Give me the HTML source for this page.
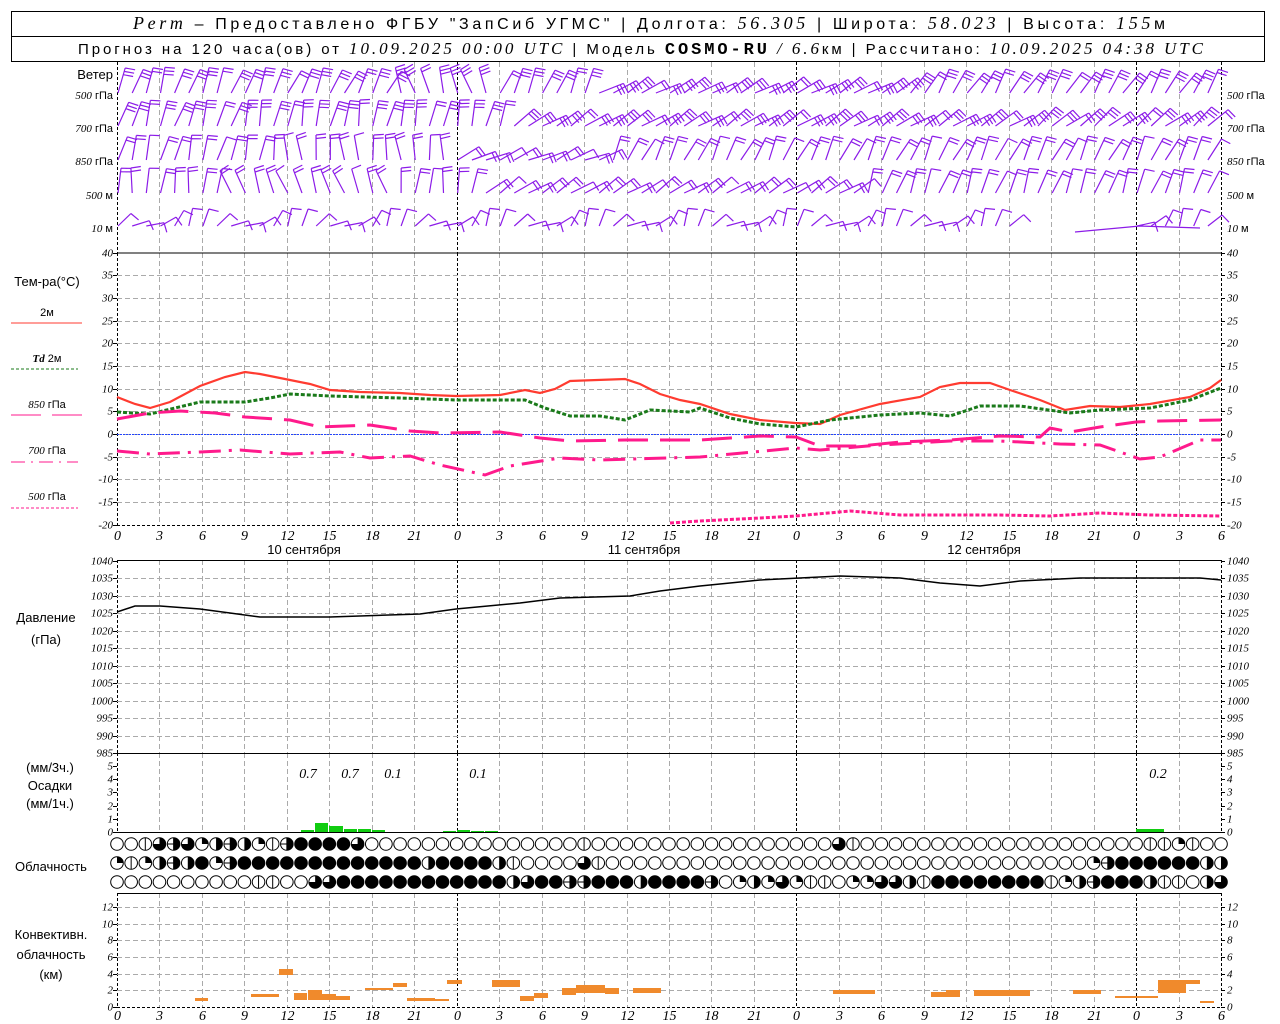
<!DOCTYPE html>
<html><head><meta charset="utf-8"><style>
html,body{margin:0;padding:0;background:#fff;width:1280px;height:1024px;overflow:hidden}
svg{display:block}
text{font-family:"Liberation Sans",sans-serif;font-size:12px;fill:#000}
.n{font-family:"Liberation Serif",serif;font-style:italic;font-size:11px}
.ax{font-family:"Liberation Serif",serif;font-style:italic;font-size:14px}
</style></head><body>
<svg id="s" width="1280" height="1024" xmlns="http://www.w3.org/2000/svg">
<rect x="11.5" y="11.5" width="1253" height="50" fill="none" stroke="#000"/>
<line x1="11" y1="36.5" x2="1265" y2="36.5" stroke="#000"/>
<text x="133" y="29" textLength="1032" lengthAdjust="spacing" style="font-size:16px"><tspan style="font-family:'Liberation Serif';font-style:italic;font-size:18px">Perm</tspan> – Предоставлено ФГБУ "ЗапСиб УГМС" | Долгота: <tspan style="font-family:'Liberation Serif';font-style:italic;font-size:18px">56.305</tspan> | Широта: <tspan style="font-family:'Liberation Serif';font-style:italic;font-size:18px">58.023</tspan> | Высота: <tspan style="font-family:'Liberation Serif';font-style:italic;font-size:18px">155</tspan>м</text>
<text x="78" y="54" textLength="1125" lengthAdjust="spacing" style="font-size:15px">Прогноз на 120 часа(ов) от <tspan style="font-family:'Liberation Serif';font-style:italic;font-size:17px">10.09.2025 00:00 UTC</tspan>  | Модель <tspan style="font-family:'Liberation Mono';font-weight:bold;font-size:17px">COSMO-RU</tspan> <tspan style="font-family:'Liberation Serif';font-style:italic;font-size:17px">/ 6.6</tspan>км | Рассчитано: <tspan style="font-family:'Liberation Serif';font-style:italic;font-size:17px">10.09.2025 04:38 UTC</tspan></text>
<g id="grid"></g>
<g id="wind" stroke="#8c1ce8" stroke-width="1.2" fill="none"></g>
<g id="data"></g>
<g id="clouds"></g>
<text x="113" y="79" text-anchor="end" style="font-size:13px">Ветер</text>
<text x="113" y="99" text-anchor="end" style="font-size:11px"><tspan class="n">500</tspan> гПа</text>
<text x="113" y="132" text-anchor="end" style="font-size:11px"><tspan class="n">700</tspan> гПа</text>
<text x="113" y="165" text-anchor="end" style="font-size:11px"><tspan class="n">850</tspan> гПа</text>
<text x="113" y="199" text-anchor="end" style="font-size:11px"><tspan class="n">500</tspan> м</text>
<text x="113" y="232" text-anchor="end" style="font-size:11px"><tspan class="n">10</tspan>   м</text>
<text x="1227" y="99" style="font-size:11px"><tspan class="n">500</tspan> гПа</text>
<text x="1227" y="132" style="font-size:11px"><tspan class="n">700</tspan> гПа</text>
<text x="1227" y="165" style="font-size:11px"><tspan class="n">850</tspan> гПа</text>
<text x="1227" y="199" style="font-size:11px"><tspan class="n">500</tspan> м</text>
<text x="1227" y="232" style="font-size:11px"><tspan class="n">10</tspan>   м</text>
<text x="47" y="286" text-anchor="middle" style="font-size:13px">Тем-ра(°C)</text>
<text x="47" y="316" text-anchor="middle" style="font-size:11px">2м</text>
<line x1="11" y1="323" x2="82" y2="323" stroke="#ff3b30"/>
<text x="47" y="362" text-anchor="middle" style="font-size:11px"><tspan class="n" style="font-weight:bold">Td</tspan>  2м</text>
<line x1="11" y1="369" x2="78" y2="369" stroke="#1a7a1a" stroke-dasharray="3,2"/>
<text x="47" y="408" text-anchor="middle" style="font-size:11px"><tspan class="n">850</tspan> гПа</text>
<line x1="11" y1="415" x2="41" y2="415" stroke="#ff1a8c"/><line x1="52" y1="415" x2="82" y2="415" stroke="#ff1a8c"/>
<text x="47" y="454" text-anchor="middle" style="font-size:11px"><tspan class="n">700</tspan> гПа</text>
<line x1="11" y1="462" x2="78" y2="462" stroke="#ff1a8c" stroke-dasharray="14,6,2,6"/>
<text x="47" y="500" text-anchor="middle" style="font-size:11px"><tspan class="n">500</tspan> гПа</text>
<line x1="11" y1="508" x2="78" y2="508" stroke="#ff1a8c" stroke-dasharray="3,2"/>
<text x="304" y="554" text-anchor="middle" style="font-size:13px">10 сентября</text>
<text x="644" y="554" text-anchor="middle" style="font-size:13px">11 сентября</text>
<text x="984" y="554" text-anchor="middle" style="font-size:13px">12 сентября</text>
<text x="46" y="622" text-anchor="middle" style="font-size:13px">Давление</text>
<text x="46" y="644" text-anchor="middle" style="font-size:13px">(гПа)</text>
<text x="50" y="772" text-anchor="middle" style="font-size:13px">(мм/3ч.)</text>
<text x="50" y="790" text-anchor="middle" style="font-size:13px">Осадки</text>
<text x="50" y="808" text-anchor="middle" style="font-size:13px">(мм/1ч.)</text>
<text x="51" y="871" text-anchor="middle" style="font-size:13px">Облачность</text>
<text x="51" y="939" text-anchor="middle" style="font-size:13px">Конвективн.</text>
<text x="51" y="959" text-anchor="middle" style="font-size:13px">облачность</text>
<text x="51" y="979" text-anchor="middle" style="font-size:13px">(км)</text>
<text x="308" y="778" text-anchor="middle" class="ax">0.7</text>
<text x="350" y="778" text-anchor="middle" class="ax">0.7</text>
<text x="393" y="778" text-anchor="middle" class="ax">0.1</text>
<text x="478" y="778" text-anchor="middle" class="ax">0.1</text>
<text x="1158" y="778" text-anchor="middle" class="ax">0.2</text>
<g id="lbl"></g>
</svg>
<script>
var NS="http://www.w3.org/2000/svg",S=document.getElementById('s');
function el(p,t,a){var e=document.createElementNS(NS,t);for(var k in a)e.setAttribute(k,a[k]);p.appendChild(e);return e;}
function X(h){return 117+14.154*h;}
var G=document.getElementById('grid'),D=document.getElementById('data'),L=document.getElementById('lbl'),C=document.getElementById('clouds'),W=document.getElementById('wind');
for(var h=0;h<=78;h+=3){var x=Math.round(X(h))+0.5;var day=(h%24==0)||h==78;
 [[62,253],[253,525],[560,753],[753,832],[893,1008]].forEach(function(r){
  el(G,'line',{x1:x,y1:r[0],x2:x,y2:r[1],stroke:day?'#000':'#aaa','stroke-dasharray':day?'3,2':'5,3'});});
 var lab=String(h%24);
 var t1=el(L,'text',{x:x,y:540,'text-anchor':'middle','class':'ax'});t1.textContent=lab;
 var t2=el(L,'text',{x:x,y:1020,'text-anchor':'middle','class':'ax'});t2.textContent=lab;}
[[253,'#000',''],[560.5,'#000',''],[753.5,'#000',''],[832.5,'#000',''],[893.5,'#000',''],[1007.5,'#000','3,2']].forEach(function(l){el(G,'line',{x1:117,y1:l[0],x2:1221,y2:l[0],stroke:l[1],'stroke-dasharray':l[2]});});
function ylab(y,v){var a=el(L,'text',{x:113,y:y+3,'text-anchor':'end','class':'n'});a.textContent=v;var b=el(L,'text',{x:1227,y:y+3,'class':'n'});b.textContent=v;
 el(G,'line',{x1:113,y1:y,x2:117,y2:y,stroke:'#000'});el(G,'line',{x1:1221,y1:y,x2:1225,y2:y,stroke:'#000'});}
for(var v=40;v>=-20;v-=5){var y=Math.round(434-v*4.533)+0.5;if(v<40&&v>-20)el(G,'line',{x1:117,y1:y,x2:1221,y2:y,stroke:'#aaa','stroke-dasharray':'5,3'});ylab(y,v);}
el(G,'line',{x1:117,y1:525.5,x2:1221,y2:525.5,stroke:'#000','stroke-dasharray':'3,2'});
el(G,'line',{x1:117,y1:434.5,x2:1221,y2:434.5,stroke:'#2244ff','stroke-dasharray':'2,1'});
for(var p=1040;p>=985;p-=5){var y=Math.round(561+(1040-p)*3.49)+0.5;if(p<1040&&p>985)el(G,'line',{x1:117,y1:y,x2:1221,y2:y,stroke:'#aaa','stroke-dasharray':'5,3'});ylab(y,p);}
for(var m=0;m<=5;m++){var y=Math.round(832-m*13.2)+0.5;ylab(y,m);}
for(var k=0;k<=12;k+=2){var y=Math.round(1007-k*8.35)+0.5;if(k>0)el(G,'line',{x1:117,y1:y,x2:1221,y2:y,stroke:'#aaa','stroke-dasharray':'5,3'});ylab(y,k);}
function pl(pts,st,w,da){el(D,'polyline',{points:pts,fill:'none',stroke:st,'stroke-width':w,'stroke-dasharray':da||''});}
pl("117,397 135,404 150,408 170,402 200,386 225,377 245,372 260,374 290,380 310,384 330,390 360,392 400,393 430,395 456,396 500,395 525,390 540,393 555,389 570,381 625,379 640,384 660,394 680,400 700,404 730,414 760,420 795,423 820,424 840,415 880,404 920,397 940,387 960,383 990,383 1010,390 1040,400 1065,410 1090,406 1120,407 1150,404 1190,397 1210,388 1221,380",'#ff3b30',2.2);
pl("117,412 150,414 175,408 200,402 245,402 270,398 290,394 330,396 400,398 456,400 525,400 545,408 570,416 600,416 625,420 650,410 690,412 700,408 730,418 760,424 796,427 830,420 880,415 920,413 950,416 980,406 1020,406 1070,413 1100,410 1150,408 1190,400 1221,388",'#1a7a1a',3,'4,2');
pl("117,419 150,413 180,411 215,413 245,417 290,420 320,427 370,425 410,431 440,433 500,432 540,438 570,441 625,440 700,440 760,436 796,437 820,446 860,446 900,442 950,440 1000,436 1040,437 1050,428 1070,432 1100,427 1136,422 1160,421 1221,420",'#ff1a8c',3,'30,12');
pl("117,451 150,454 200,452 240,450 290,454 340,452 370,458 410,456 440,465 485,475 510,466 560,458 600,460 700,457 796,448 820,450 880,445 950,441 1000,441 1060,444 1100,445 1140,459 1160,457 1200,440 1221,440",'#ff1a8c',3,'22,8,3,8');
pl("670,523 700,521 760,518 796,516 850,511 900,515 1000,515 1050,516 1100,513 1150,515 1221,516",'#ff1a8c',3,'4,2');
pl("117,612 135,606 160,606 200,609 230,613 260,617 330,617 420,614 456,609 520,603 560,598 630,596 660,591 700,586 760,580 840,576 900,578 940,583 980,586 1020,581 1080,578 1200,578 1221,580",'#000',1.5);
[[301,314,830],[315,328,823],[329,343,826],[344,357,829],[358,371,829],[372,385,830],[443,456,831],[457,470,830],[471,484,831],[485,498,831],[1136,1150,829],[1150,1164,829]].forEach(function(b){el(D,'rect',{x:b[0],y:b[2],width:b[1]-b[0],height:832-b[2],fill:'#11cc11'});});
[[195,208,998,1001],[251,279,994,997],[279,293,969,975],[294,307,993,1000],[308,322,990,1000],[322,336,994,1000],[336,350,996,1000],[365,393,988,990],[393,407,983,987],[407,435,998,1001],[435,449,999,1001],[447,462,980,984],[492,520,980,987],[520,534,996,1001],[534,548,993,998],[562,576,988,995],[576,605,985,993],[605,619,988,994],[633,661,988,993],[833,875,990,994],[931,946,992,997],[946,960,990,997],[974,1030,990,996],[1073,1101,990,994],[1115,1158,996,998],[1158,1186,980,993],[1186,1200,980,984],[1200,1214,1001,1003]].forEach(function(b){el(D,'rect',{x:b[0],y:b[2],width:b[1]-b[0],height:b[3]-b[2],fill:'#f08a2c'});});
var rows=[
"00vtetqhehqveffff"+"t"+"000000000000000"+"v"+"00000000000000000"+"tv"+"00000000000000000000"+"vvqv00",
"qvqhehfqefffffffffffffhffffhv0000tv000000"+"0000000000000000000000000000"+"qeffffffhh",
"0000000000vv00ttffffffffffffhtffeefffhffffe0qhq"+"tqvv0qqtthvffffffffvqhefffhvv0htfeffff"];
var cy=[844,863,882];
rows.forEach(function(r,ri){while(r.length<79)r+="0";r=r.substr(0,79);
 for(var i=0;i<79;i++){var cx=X(i),y=cy[ri],R=6.3,c=r[i];
  el(C,'circle',{cx:cx,cy:y,r:R,fill:c=='f'?'#000':'#fff',stroke:'#000','stroke-width':1});
  if(c=='v')el(C,'line',{x1:cx,y1:y-R,x2:cx,y2:y+R,stroke:'#000'});
  if(c=='e'){el(C,'line',{x1:cx-R,y1:y,x2:cx+R,y2:y,stroke:'#000'});el(C,'line',{x1:cx,y1:y-R,x2:cx,y2:y+R,stroke:'#000'});el(C,'path',{d:'M'+cx+' '+(y-R)+'A'+R+' '+R+' 0 0 1 '+cx+' '+(y+R)+'Z',fill:'#000'});}
  if(c=='h')el(C,'path',{d:'M'+cx+' '+(y-R)+'A'+R+' '+R+' 0 0 1 '+cx+' '+(y+R)+'Z',fill:'#000'});
  if(c=='q')el(C,'path',{d:'M'+cx+' '+y+'L'+cx+' '+(y-R)+'A'+R+' '+R+' 0 0 1 '+(cx+R)+' '+y+'Z',fill:'#000'});
  if(c=='t')el(C,'path',{d:'M'+cx+' '+y+'L'+cx+' '+(y-R)+'A'+R+' '+R+' 0 1 1 '+(cx-R)+' '+y+'Z',fill:'#000'});
 }});
function ang(row,h){
 var s=Math.sin(h*1.7+row)*0.15;
 if(row==0){if(h<20)return 0.28+s+h*0.01;if(h<27)return -0.3+s;if(h<34)return 0.4+s;if(h<56)return 1.05+s;return 0.55+s;}
 if(row==1){if(h<28)return 0.3+s-(h>8?0.1:0);if(h<64)return 1.0+s;return 0.9+s;}
 if(row==2){if(h<24)return 0.25+s-(h>10?0.35:0);if(h<35)return 1.15+s;return 0.45+s;}
 if(row==3){if(h<8)return 0.1+s;if(h<20)return -0.35+s;if(h<26)return 0.1+s;if(h<53)return 1.0+s;return 0.35+s;}
 return 0.8+Math.sin(h*0.9)*0.6;}
var base=[93,126,160,193,226],len=[26,26,25,25,18],nf=[3,3,2,2,1];
for(var r=0;r<5;r++)for(var h=0;h<78;h++){
 if(r==4&&h>=64&&h<72)continue;
 var a=ang(r,h),x0=X(h)+1,y0=base[r],l=len[r];
 var tx=x0+l*Math.sin(a),ty=y0-l*Math.cos(a);
 var d='M'+x0.toFixed(1)+' '+y0+'L'+tx.toFixed(1)+' '+ty.toFixed(1);
 var ux=Math.sin(a),uy=-Math.cos(a),px=Math.cos(a),py=Math.sin(a);
 var n=nf[r]-((h%5==2)?1:0);if(n<1)n=1;
 for(var f=0;f<n;f++){var bx=tx-ux*f*3.5,by=ty-uy*f*3.5;d+='M'+bx.toFixed(1)+' '+by.toFixed(1)+'L'+(bx+px*10+ux*1).toFixed(1)+' '+(by+py*10+uy*1).toFixed(1);}
 el(W,'path',{d:d});}
el(W,'path',{d:'M1075 232L1140 226L1200 228'});
</script>
</body></html>
